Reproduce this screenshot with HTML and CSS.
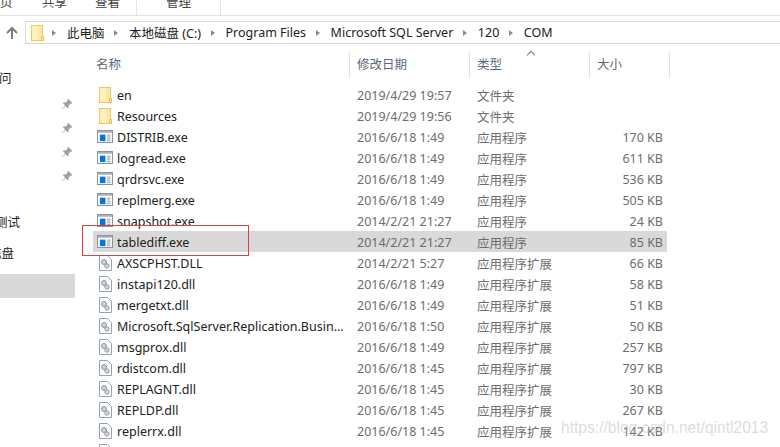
FILE: index.html
```html
<!DOCTYPE html>
<html lang="zh-CN">
<head>
  <meta charset="UTF-8" />
  <title>COM</title>
  <link rel="stylesheet" href="styles.css">
</head>
<body>

<svg class="defs" width="0" height="0">
  <symbol id="folder" viewBox="0 0 13 16">
    <rect x="0.5" y="0.5" width="11" height="15" fill="#fbe9a6" stroke="#eccb5e"/>
    <rect x="1" y="1" width="6" height="14" fill="#fdf0bd"/>
    <path d="M10.5 11.5h2v4h-2z" fill="#fdf0bd" stroke="#e6be48"/>
  </symbol>
  <symbol id="exe" viewBox="0 0 17 14">
    <rect x="0.5" y="0.5" width="16" height="13" fill="#fff" stroke="#7f8a94"/>
    <rect x="1" y="1" width="15" height="2" fill="#a9b2ba"/>
    <rect x="3" y="5" width="6" height="7" fill="#0a74da"/>
    <path d="M10.5 5.5h4M10.5 7.5h4M10.5 9.5h4M10.5 11.5h4" stroke="#8c9aa6"/>
  </symbol>
  <symbol id="dll" viewBox="0 0 13 16">
    <path d="M0.5 0.5h8l4 4v11h-12z" fill="#fff" stroke="#9aa1a8"/>
    <circle cx="5" cy="7" r="2.5" fill="#c4d3df" stroke="#8a98a5"/>
    <circle cx="8" cy="11" r="2.2" fill="#d5d9dd" stroke="#949ca4"/>
  </symbol>
  <symbol id="pin" viewBox="0 0 12 12">
    <path d="M7 0.5l4.5 4.5-1 .8-.8-.3-2.2 2.2.2 1.8-.9.9-2.2-2.2L1 11.2 0.8 11l3.4-3.6L2 5.2l.9-.9 1.8.2L6.9 2.3l-.3-.8z" fill="#9aa0a5"/>
  </symbol>
</svg>

<div class="ribbon">
  <span class="tab tab-home">页</span>
  <span class="tab tab-share">共享</span>
  <span class="tab tab-view">查看</span>
  <span class="tab tab-manage">管理</span>
</div>

<div class="nav">
  <svg class="up" width="16" height="16" viewBox="0 0 16 16">
    <path d="M8 14V3M3 8l5-5 5 5" fill="none" stroke="#7d7d7d" stroke-width="2"/>
  </svg>
  <div class="address">
    <svg class="addr-folder"><use href="#folder"/></svg>
    <span class="sep"></span><span>此电脑</span>
    <span class="sep"></span><span>本地磁盘 (C:)</span>
    <span class="sep"></span><span>Program Files</span>
    <span class="sep"></span><span>Microsoft SQL Server</span>
    <span class="sep"></span><span>120</span>
    <span class="sep"></span><span>COM</span>
  </div>
</div>

<div class="main">
  <div class="sidebar">
    <div class="side-text side-access">问</div>
    <svg class="pin pin-first"><use href="#pin"/></svg>
    <svg class="pin"><use href="#pin"/></svg>
    <svg class="pin"><use href="#pin"/></svg>
    <svg class="pin"><use href="#pin"/></svg>
    <div class="side-text side-test">测试</div>
    <div class="side-text side-disk">磁盘</div>
    <div class="side-selected"></div>
  </div>

  <div class="files">
    <div class="head">
      <div class="hcell">名称</div>
      <div class="hcell">修改日期</div>
      <div class="hcell">类型<span class="caret"></span></div>
      <div class="hcell">大小</div>
    </div>

    <div class="row"><svg class="ico-paper"><use href="#folder"/></svg><span class="name">en</span><span>2019/4/29 19:57</span><span>文件夹</span><span class="size"></span></div>
    <div class="row"><svg class="ico-paper"><use href="#folder"/></svg><span class="name">Resources</span><span>2019/4/29 19:56</span><span>文件夹</span><span class="size"></span></div>
    <div class="row"><svg class="ico-exe"><use href="#exe"/></svg><span class="name">DISTRIB.exe</span><span>2016/6/18 1:49</span><span>应用程序</span><span class="size">170 KB</span></div>
    <div class="row"><svg class="ico-exe"><use href="#exe"/></svg><span class="name">logread.exe</span><span>2016/6/18 1:49</span><span>应用程序</span><span class="size">611 KB</span></div>
    <div class="row"><svg class="ico-exe"><use href="#exe"/></svg><span class="name">qrdrsvc.exe</span><span>2016/6/18 1:49</span><span>应用程序</span><span class="size">536 KB</span></div>
    <div class="row"><svg class="ico-exe"><use href="#exe"/></svg><span class="name">replmerg.exe</span><span>2016/6/18 1:49</span><span>应用程序</span><span class="size">505 KB</span></div>
    <div class="row"><svg class="ico-exe"><use href="#exe"/></svg><span class="name">snapshot.exe</span><span>2014/2/21 21:27</span><span>应用程序</span><span class="size">24 KB</span></div>
    <div class="row selected"><svg class="ico-exe"><use href="#exe"/></svg><span class="name">tablediff.exe</span><span>2014/2/21 21:27</span><span>应用程序</span><span class="size">85 KB</span></div>
    <div class="row"><svg class="ico-paper"><use href="#dll"/></svg><span class="name">AXSCPHST.DLL</span><span>2014/2/21 5:27</span><span>应用程序扩展</span><span class="size">66 KB</span></div>
    <div class="row"><svg class="ico-paper"><use href="#dll"/></svg><span class="name">instapi120.dll</span><span>2016/6/18 1:49</span><span>应用程序扩展</span><span class="size">58 KB</span></div>
    <div class="row"><svg class="ico-paper"><use href="#dll"/></svg><span class="name">mergetxt.dll</span><span>2016/6/18 1:49</span><span>应用程序扩展</span><span class="size">51 KB</span></div>
    <div class="row"><svg class="ico-paper"><use href="#dll"/></svg><span class="name">Microsoft.SqlServer.Replication.Busin...</span><span>2016/6/18 1:50</span><span>应用程序扩展</span><span class="size">50 KB</span></div>
    <div class="row"><svg class="ico-paper"><use href="#dll"/></svg><span class="name">msgprox.dll</span><span>2016/6/18 1:49</span><span>应用程序扩展</span><span class="size">257 KB</span></div>
    <div class="row"><svg class="ico-paper"><use href="#dll"/></svg><span class="name">rdistcom.dll</span><span>2016/6/18 1:45</span><span>应用程序扩展</span><span class="size">797 KB</span></div>
    <div class="row"><svg class="ico-paper"><use href="#dll"/></svg><span class="name">REPLAGNT.dll</span><span>2016/6/18 1:45</span><span>应用程序扩展</span><span class="size">30 KB</span></div>
    <div class="row"><svg class="ico-paper"><use href="#dll"/></svg><span class="name">REPLDP.dll</span><span>2016/6/18 1:45</span><span>应用程序扩展</span><span class="size">267 KB</span></div>
    <div class="row"><svg class="ico-paper"><use href="#dll"/></svg><span class="name">replerrx.dll</span><span>2016/6/18 1:45</span><span>应用程序扩展</span><span class="size">142 KB</span></div>
    <div class="row"><svg class="ico-paper"><use href="#dll"/></svg><span class="name">replicat.dll</span><span>2016/6/18 1:45</span><span>应用程序扩展</span><span class="size">90 KB</span></div>
  </div>
</div>

<div class="redbox"></div>
<div class="watermark">https://blog.csdn.net/qintl2013</div>

</body>
</html>
```

FILE: styles.css
```css
html, body {
  margin: 0;
  padding: 0;
  height: 447px;
  overflow: hidden;
}
body {
  position: relative;
  background: white;
  color: #222;
  font-family: "Noto Sans", "Noto Sans CJK SC", sans-serif;
  font-size: 12.5px;
}
.defs {
  position: absolute;
}
.ribbon {
  display: flex;
  height: 15px;
  border-bottom: 1px solid #e3e3e3;
  overflow: hidden;
}
.tab {
  display: block;
  box-sizing: border-box;
  height: 28px;
  margin-top: -11px;
  line-height: 28px;
  color: #444;
}
.tab-home { width: 42px; }
.tab-share { width: 53px; }
.tab-view { width: 42px; border-right: 1px solid #e6e6e6; }
.tab-manage { width: 55px; margin-left: 29px; border-right: 1px solid #e6e6e6; }

.nav {
  display: flex;
  align-items: center;
  height: 23px;
  margin-top: 5px;
}
.up {
  width: 16px;
  margin: 0 5px 0 4px;
}
.address {
  flex: 1;
  display: flex;
  align-items: center;
  height: 21px;
  padding-left: 5px;
  border: 1px solid #d9d9d9;
  border-right: 0;
}
.addr-folder {
  width: 13px;
  height: 16px;
  margin-right: -1.5px;
}
.sep {
  width: 0;
  height: 0;
  margin: 0 11px 0 9.5px;
  border-left: 4px solid #8a8a8a;
  border-top: 3px solid transparent;
  border-bottom: 3px solid transparent;
}

.main {
  display: flex;
  margin-top: 7px;
}
.sidebar {
  width: 75px;
  height: 396px;
  margin-right: 2px;
  display: flex;
  flex-direction: column;
  align-items: flex-start;
  flex-shrink: 0;
}
.side-text {
  line-height: 18px;
  white-space: nowrap;
}
.side-access {
  margin: 19px 0 0 -1px;
}
.pin {
  width: 12px;
  height: 12px;
  margin: 0 0 12px 61px;
}
.pin-first {
  margin-top: 10px;
}
.side-test {
  margin: 20px 0 0 -5px;
}
.side-disk {
  margin: 13px 0 0 -11px;
}
.side-selected {
  width: 75px;
  height: 24px;
  margin-top: 11px;
  background: #d9d9d9;
}

.files {
  width: 577px;
  margin-left: 16px;
}
.head {
  display: grid;
  grid-template-columns: 257px 120px 120px 80px;
  height: 27px;
  margin-bottom: 6px;
}
.hcell {
  position: relative;
  padding-left: 7px;
  line-height: 27px;
  color: #5a6a7a;
  border-right: 1px solid #e2e2e2;
}
.hcell:first-child {
  padding-left: 3px;
}
.caret {
  position: absolute;
  top: 1px;
  left: 58px;
  width: 5px;
  height: 5px;
  border-left: 1px solid #777;
  border-top: 1px solid #777;
  transform: rotate(45deg);
}
.row {
  display: grid;
  grid-template-columns: 24px 240px 120px 90px 96px;
  align-items: center;
  width: 574px;
  height: 21px;
  color: #6d6d6d;
  white-space: nowrap;
}
.row span {
  display: block;
  margin-top: 2px;
}
.row .name {
  color: #222;
}
.row .size {
  text-align: right;
}
.row svg {
  justify-self: center;
}
.ico-paper {
  width: 13px;
  height: 16px;
}
.ico-exe {
  width: 16px;
  height: 13px;
}
.selected {
  background: #d9d9d9;
}

.redbox {
  position: absolute;
  left: 82px;
  top: 225px;
  width: 165px;
  height: 29px;
  border: 1px solid #e0403c;
}
.watermark {
  position: absolute;
  left: 561px;
  top: 419px;
  font-family: "Liberation Sans", sans-serif;
  font-size: 15.6px;
  color: rgba(190, 190, 190, 0.55);
  white-space: nowrap;
}
```
